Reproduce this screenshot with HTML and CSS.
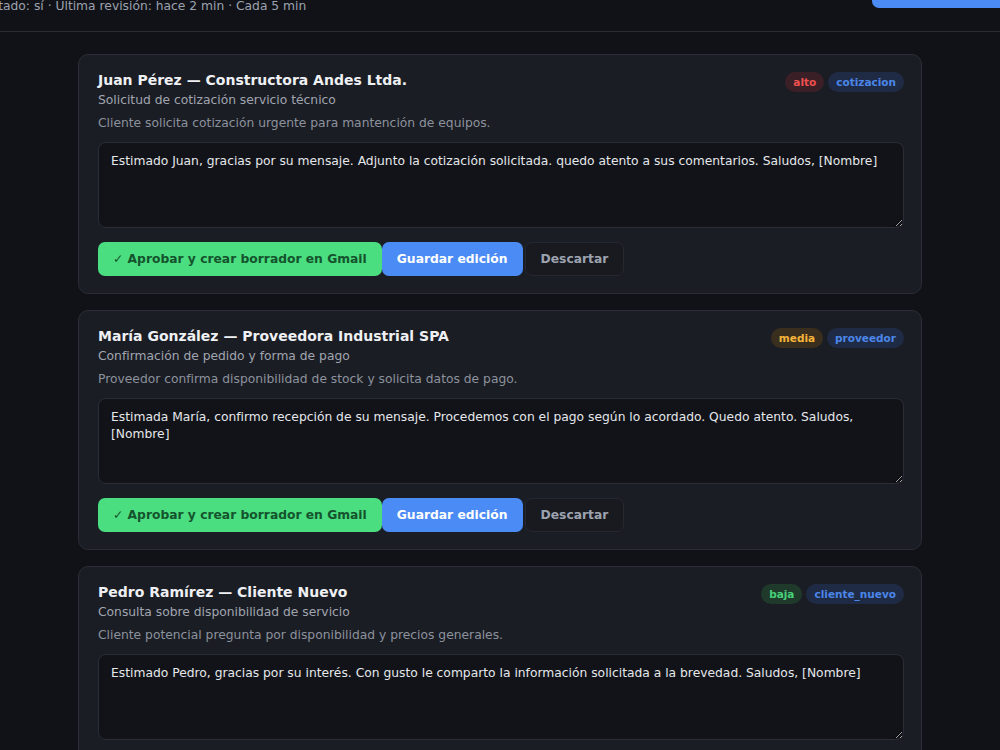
FILE: index.html
```html
<!DOCTYPE html>
<html lang="es">
<head>
<meta charset="utf-8">
<title>Bandeja de respuestas</title>
<link rel="stylesheet" href="styles.css">
</head>
<body>
<header class="topbar">
  <div class="topbar-inner">
    <div class="brand">
      <h1 class="brand-title">Asistente de correo</h1>
      <p class="brand-status">Estado: sí · Última revisión: hace 2 min · Cada 5 min</p>
    </div>
    <button class="btn btn-primary btn-refresh">Revisar ahora</button>
  </div>
</header>

<main class="queue">
  <article class="card">
    <div class="card-head">
      <div class="card-meta">
        <h2 class="card-title">Juan Pérez — Constructora Andes Ltda.</h2>
        <p class="card-subject">Solicitud de cotización servicio técnico</p>
      </div>
      <div class="tags">
        <span class="tag tag-red">alto</span>
        <span class="tag tag-blue">cotizacion</span>
      </div>
    </div>
    <p class="card-summary">Cliente solicita cotización urgente para mantención de equipos.</p>
    <textarea class="reply">Estimado Juan, gracias por su mensaje. Adjunto la cotización solicitada. quedo atento a sus comentarios. Saludos, [Nombre]</textarea>
    <div class="actions">
      <button class="btn btn-approve">✓ Aprobar y crear borrador en Gmail</button>
      <button class="btn btn-primary">Guardar edición</button>
      <button class="btn btn-ghost">Descartar</button>
    </div>
  </article>

  <article class="card">
    <div class="card-head">
      <div class="card-meta">
        <h2 class="card-title">María González — Proveedora Industrial SPA</h2>
        <p class="card-subject">Confirmación de pedido y forma de pago</p>
      </div>
      <div class="tags">
        <span class="tag tag-amber">media</span>
        <span class="tag tag-blue">proveedor</span>
      </div>
    </div>
    <p class="card-summary">Proveedor confirma disponibilidad de stock y solicita datos de pago.</p>
    <textarea class="reply">Estimada María, confirmo recepción de su mensaje. Procedemos con el pago según lo acordado. Quedo atento. Saludos, [Nombre]</textarea>
    <div class="actions">
      <button class="btn btn-approve">✓ Aprobar y crear borrador en Gmail</button>
      <button class="btn btn-primary">Guardar edición</button>
      <button class="btn btn-ghost">Descartar</button>
    </div>
  </article>

  <article class="card">
    <div class="card-head">
      <div class="card-meta">
        <h2 class="card-title">Pedro Ramírez — Cliente Nuevo</h2>
        <p class="card-subject">Consulta sobre disponibilidad de servicio</p>
      </div>
      <div class="tags">
        <span class="tag tag-green">baja</span>
        <span class="tag tag-blue">cliente_nuevo</span>
      </div>
    </div>
    <p class="card-summary">Cliente potencial pregunta por disponibilidad y precios generales.</p>
    <textarea class="reply">Estimado Pedro, gracias por su interés. Con gusto le comparto la información solicitada a la brevedad. Saludos, [Nombre]</textarea>
    <div class="actions">
      <button class="btn btn-approve">✓ Aprobar y crear borrador en Gmail</button>
      <button class="btn btn-primary">Guardar edición</button>
      <button class="btn btn-ghost">Descartar</button>
    </div>
  </article>
</main>
<script src="script.js"></script>
</body>
</html>
```

FILE: styles.css
```css
* {
  box-sizing: border-box;
}

html, body {
  margin: 0;
  padding: 0;
}

body {
  background: #111217;
  color: #e5e7eb;
  font-family: "DejaVu Sans", "Noto Sans", sans-serif;
  overflow-x: hidden;
}

/* top bar */
.topbar {
  border-bottom: 1px solid #2a2c33;
  padding: 16px 0;
}

.topbar-inner {
  margin: 0 -16px;
  display: flex;
  align-items: center;
  justify-content: space-between;
}

.brand-title {
  margin: 0 0 4px;
  font-size: 20px;
  line-height: 28px;
  color: #f3f4f6;
}

.brand-status {
  margin: 0;
  font-size: 12.3px;
  line-height: 18px;
  color: #9ca3af;
}

/* queue of pending replies */
.queue {
  max-width: 844px;
  margin: 0 auto;
  padding: 22px 0 40px;
  display: flex;
  flex-direction: column;
  gap: 16px;
}

.card {
  background: #1b1d24;
  border: 1px solid #2a2d36;
  border-radius: 10px;
  padding: 16px 17px 17px 19px;
}

.card-head {
  display: flex;
  justify-content: space-between;
  align-items: flex-start;
}

.card-title {
  margin: 0;
  font-size: 14px;
  line-height: 18px;
  font-weight: 700;
  color: #eef0f3;
}

.card-subject {
  margin: 3px 0 0;
  font-size: 12.3px;
  line-height: 17px;
  color: #a0a5b0;
}

.card-summary {
  margin: 6px 0 10px;
  font-size: 12.3px;
  line-height: 17px;
  color: #8c929d;
}

.tags {
  display: flex;
  gap: 4px;
  padding-top: 1px;
}

.tag {
  font-size: 10.5px;
  font-weight: 700;
  line-height: 20px;
  padding: 0 8px;
  border-radius: 10px;
}

.tag-red {
  background: #3a2026;
  color: #ef5050;
}

.tag-blue {
  background: #1f2b45;
  color: #4b86e8;
}

.tag-amber {
  background: #3a2f1e;
  color: #f6b43a;
}

.tag-green {
  background: #1f3a2b;
  color: #46d07a;
}

.reply {
  display: block;
  width: 100%;
  height: 86px;
  resize: vertical;
  background: #111318;
  border: 1px solid #2a2d36;
  border-radius: 8px;
  padding: 10px 12px;
  color: #e5e7eb;
  font-family: "DejaVu Sans", "Noto Sans", sans-serif;
  font-size: 12.3px;
  line-height: 17px;
}

.actions {
  display: flex;
  margin-top: 14px;
}

/* buttons */
.btn {
  height: 34px;
  border: 0;
  border-radius: 7px;
  font-family: "DejaVu Sans", "Noto Sans", sans-serif;
  font-size: 12.3px;
  font-weight: 700;
  padding: 0 15px;
  cursor: pointer;
}

.btn-approve {
  background: #4ade80;
  color: #14532d;
}

.btn-primary {
  background: #4b8bf5;
  color: #ffffff;
}

.btn-ghost {
  margin-left: 2px;
  background: #181a20;
  border: 1px solid #252830;
  color: #9ca3af;
}

.btn-refresh {
  height: 36px;
  padding: 0 24px;
}
```

FILE: script.js
```js
// open the queue already scrolled past the page title
window.scrollTo(0, 51);
```
